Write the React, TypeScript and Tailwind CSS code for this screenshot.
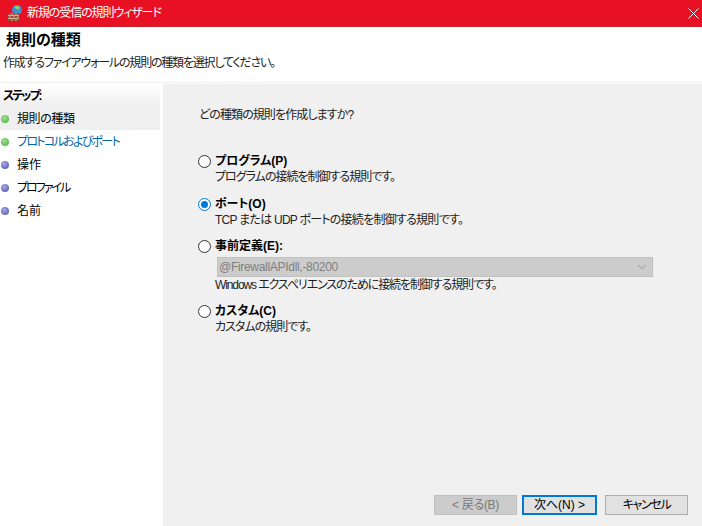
import React from 'react';
import { ChevronDown } from 'lucide-react';

// palt gives the narrow kana the reference font has
const font = "font-['Liberation_Sans','Noto_Sans_CJK_JP',sans-serif] [font-feature-settings:'palt']";

const steps = [
  { label: '規則の種類', dot: 'green', active: true, track: 'tracking-[-0.4px]' },
  { label: 'プロトコルおよびポート', dot: 'green', link: true, track: 'tracking-[-1.7px]' },
  { label: '操作', dot: 'blue', track: '' },
  { label: 'プロファイル', dot: 'blue', track: 'tracking-[-2px]' },
  { label: '名前', dot: 'blue', track: '' },
];

function Dot({ color }: { color: string }) {
  return (
    <span
      className={`ml-[1px] w-2 h-2 rounded-full shrink-0 ${
        color === 'green'
          ? 'bg-[radial-gradient(circle_at_40%_35%,#a4e08c,#3fae3c)]'
          : 'bg-[radial-gradient(circle_at_40%_35%,#a9a9e6,#4c4cb0)]'
      }`}
    />
  );
}

function Radio({ checked }: { checked?: boolean }) {
  return (
    <span
      className={`w-[13px] h-[13px] rounded-full border bg-white flex items-center justify-center shrink-0 ${
        checked ? 'border-[#0078d7]' : 'border-[#333333]'
      }`}
    >
      {checked && <span className="w-[7px] h-[7px] rounded-full bg-[#0078d7]" />}
    </span>
  );
}

function Option({ title, desc, checked, children, className, track = 'tracking-[-1px]' }: {
  title: string;
  desc: string;
  checked?: boolean;
  children?: React.ReactNode;
  className?: string;
  track?: string;
}) {
  return (
    <div className={className}>
      <div className="flex items-center gap-[4px] h-4 ml-[-1px]">
        <Radio checked={checked} />
        <span className="font-bold text-black">{title}</span>
      </div>
      {children}
      <div className={`ml-[16px] h-4 leading-4 text-[#222222] ${track}`}>{desc}</div>
    </div>
  );
}

function WizardButton({ label, kind }: { label: string; kind?: 'disabled' | 'primary' }) {
  const cls =
    kind === 'disabled'
      ? 'w-[83px] border border-[#bfbfbf] bg-[#cccccc] text-[#7a7a7a] tracking-[-0.3px]'
      : kind === 'primary'
      ? 'w-[75px] border-2 border-[#0078d7] bg-[#e1e1e1] text-black'
      : 'w-[83px] ml-[3px] border border-[#adadad] bg-[#e1e1e1] text-black tracking-[-1.3px]';
  return <div className={`h-5 flex items-center justify-center ${cls}`}>{label}</div>;
}

export default function App() {
  return (
    <div className={`w-[702px] h-[526px] flex flex-col bg-white overflow-hidden text-xs ${font}`}>
      {/* title bar */}
      <div className="h-[27px] shrink-0 bg-[#e81123] flex items-center text-white border-b border-[#c8202f]">
        <svg width="18" height="18" viewBox="0 0 18 18" className="ml-[6px]">
          <circle cx="11" cy="6" r="5" fill="#3f8fd0" />
          <path d="M8 3 a5 5 0 0 1 6 0 l-2 3z" fill="#8fd06a" />
          <rect x="2" y="9" width="11" height="8" fill="#9c4a3a" />
          <path d="M2 11.5h11M2 14.5h11M6 9v2.5M10 9v2.5M4 11.5v3M8 11.5v3M12 11.5v3M6 14.5v2.5M10 14.5v2.5" stroke="#e0c0a8" strokeWidth="0.8" />
        </svg>
        <span className="ml-[3px] tracking-[-1.1px]">新規の受信の規則ウィザード</span>
        <svg width="11" height="11" viewBox="0 0 11 11" className="ml-auto mr-[3px]">
          <path d="M0.5 0.5l10 10M10.5 0.5l-10 10" stroke="#ffffff" strokeWidth="1" />
        </svg>
      </div>

      {/* header */}
      <div className="h-[56px] shrink-0 border-b border-[#ececec] pl-[3px]">
        <div className="pl-[3px] pt-[4px] h-[25px] text-[15px] leading-[18px] font-bold text-black">規則の種類</div>
        <div className="mt-[3px] leading-4 tracking-[-1.2px] text-[#222222]">作成するファイアウォールの規則の種類を選択してください。</div>
      </div>

      <div className="flex-1 flex pt-[1px] min-h-0">
        {/* steps */}
        <div className="w-[160px] shrink-0 mr-[3px]">
          <div className="h-[23px] pl-[3px] flex items-center font-bold tracking-[-2px] text-black bg-gradient-to-b from-white to-[#eeeeee]">
            ステップ:
          </div>
          <div className="flex flex-col">
            {steps.map((s) => (
              <div
                key={s.label}
                className={`h-[23px] flex items-center gap-[8px] ${s.active ? 'bg-[#f0f0f0]' : ''} ${
                  s.link ? 'text-[#0066a8]' : 'text-black'
                }`}
              >
                <Dot color={s.dot} />
                <span className={s.track}>{s.label}</span>
              </div>
            ))}
          </div>
        </div>

        {/* content */}
        <div className="flex-1 bg-[#f0f0f0] flex flex-col pl-[36px] pr-[14px]">
          <div className="mt-[23px] h-4 leading-4 tracking-[-0.9px] text-[#222222]">どの種類の規則を作成しますか?</div>
          <Option className="mt-[30px]" title="プログラム(P)" desc="プログラムの接続を制御する規則です。" />
          <Option className="mt-[11px]" checked track="tracking-[-0.75px]" title="ポート(O)" desc="TCP または UDP ポートの接続を制御する規則です。" />
          <Option className="mt-[10px]" track="tracking-[-1.1px]" title="事前定義(E):" desc="Windows エクスペリエンスのために接続を制御する規則です。">
            <div className="ml-[18px] mt-[3px] w-[436px] h-5 bg-[#cccccc] border border-[#c0c0c0] flex items-center justify-between pl-[1px] pr-[3px] text-[#808080]">
              <span className="tracking-[-0.3px]">@FirewallAPIdll,-80200</span>
              <ChevronDown size={14} strokeWidth={1} className="text-[#777777]" />
            </div>
          </Option>
          <Option className="mt-[10px]" title="カスタム(C)" desc="カスタムの規則です。" />

          <div className="mt-auto mb-[11px] flex justify-end gap-[5px]">
            <WizardButton label="< 戻る(B)" kind="disabled" />
            <WizardButton label="次へ(N) >" kind="primary" />
            <WizardButton label="キャンセル" />
          </div>
        </div>
      </div>
    </div>
  );
}
